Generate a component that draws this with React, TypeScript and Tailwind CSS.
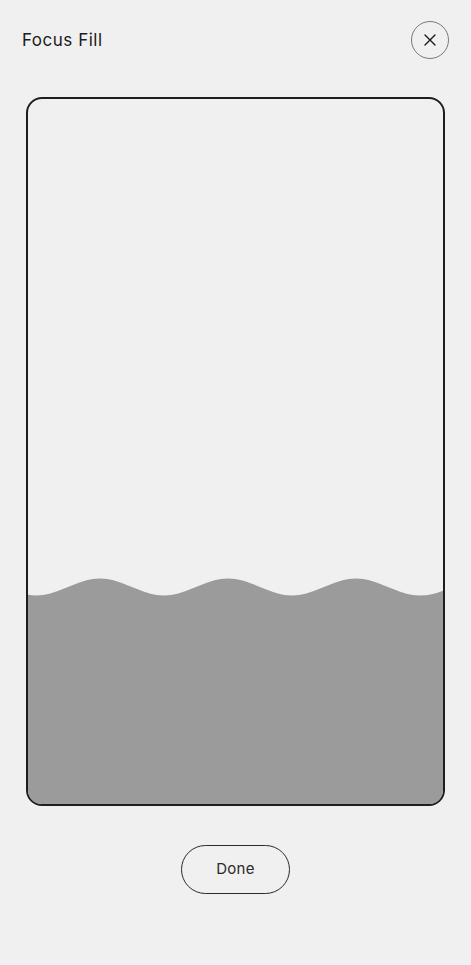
import React from "react"

// builds a sine-like wave path across the fill surface
function wavePath(width: number, height: number, period: number, firstTrough: number) {
  const half = period / 2
  const top = 0.5
  const bottom = height - 0.5
  let x = firstTrough - half
  while (x > 0) x -= period
  let d = `M ${x} ${top}`
  let atCrest = true
  while (x < width + half) {
    const nx = x + half
    const y0 = atCrest ? top : bottom
    const y1 = atCrest ? bottom : top
    d += ` C ${(x + half * 0.364).toFixed(1)} ${y0}, ${(x + half * 0.636).toFixed(1)} ${y1}, ${nx} ${y1}`
    x = nx
    atCrest = !atCrest
  }
  d += ` L ${x} ${height} L ${firstTrough - half - period * 2} ${height} Z`
  return d
}

function CloseIcon() {
  return (
    <svg width="12" height="12" viewBox="0 0 12 12" fill="none">
      <path d="M1 1 L11 11 M11 1 L1 11" stroke="#1a1a1a" strokeWidth="1.4" strokeLinecap="round" />
    </svg>
  )
}

export default function App() {
  const d = wavePath(415, 18, 128, 8)

  return (
    <div
      className="w-full min-h-[965px] bg-[#f0f0f0] flex flex-col text-[#1c1c1c]"
      style={{ fontFamily: "Inter, 'Liberation Sans', sans-serif" }}
    >
      <header className="flex items-center justify-between pl-[22px] pr-[22px] pt-[21px]">
        <h1 className="text-[17px] font-normal tracking-[0.03em] leading-none">Focus Fill</h1>
        <button className="w-[38px] h-[38px] rounded-full border border-[#7a7a7a] flex items-center justify-center">
          <CloseIcon />
        </button>
      </header>

      <div className="mx-[26px] mt-[38px] h-[709px] rounded-[16px] border-2 border-[#1e1e1e] overflow-hidden flex flex-col justify-end">
        <div className="flex flex-col">
          <svg className="block w-full h-[18px]" viewBox="0 0 415 18" preserveAspectRatio="none">
            <path d={d} fill="#9b9b9b" />
          </svg>
          <div className="h-[208px] bg-[#9b9b9b]" />
        </div>
      </div>

      <div className="flex justify-center mt-[39px]">
        <button className="w-[109px] h-[49px] rounded-full border border-[#2a2a2a] text-[15px] text-[#2a2a2a] tracking-[0.02em]">
          Done
        </button>
      </div>
    </div>
  )
}
